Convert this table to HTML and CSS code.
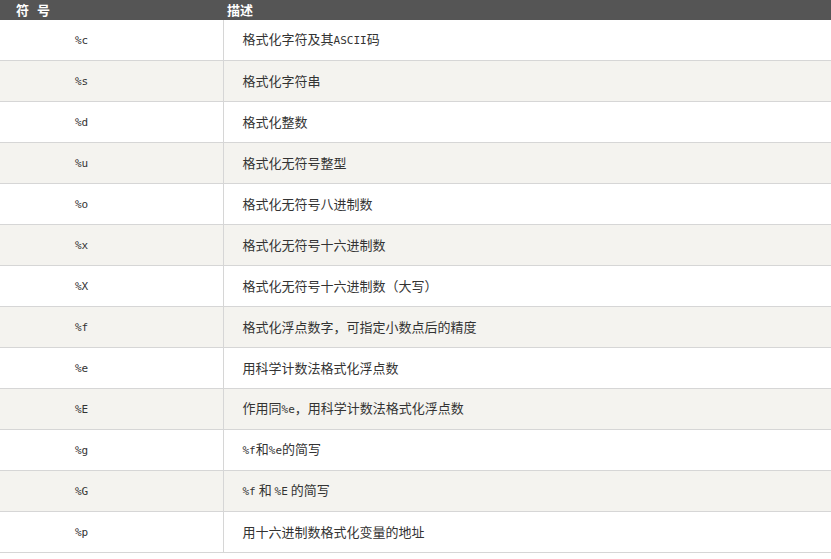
FILE: index.html
```html
<!DOCTYPE html>
<html lang="zh-CN">
<head>
<meta charset="utf-8">
<title>格式化符号</title>
<link rel="stylesheet" href="styles.css">
</head>
<body>
<table class="fmt">
  <thead>
    <tr><th class="c1">符 号</th><th class="c2">描述</th></tr>
  </thead>
  <tbody>
    <tr><td class="c1"><span class="m">%c</span></td><td class="c2">格式化字符及其<span class="m">ASCII</span>码</td></tr>
    <tr><td class="c1"><span class="m">%s</span></td><td class="c2">格式化字符串</td></tr>
    <tr><td class="c1"><span class="m">%d</span></td><td class="c2">格式化整数</td></tr>
    <tr><td class="c1"><span class="m">%u</span></td><td class="c2">格式化无符号整型</td></tr>
    <tr><td class="c1"><span class="m">%o</span></td><td class="c2">格式化无符号八进制数</td></tr>
    <tr><td class="c1"><span class="m">%x</span></td><td class="c2">格式化无符号十六进制数</td></tr>
    <tr><td class="c1"><span class="m">%X</span></td><td class="c2">格式化无符号十六进制数（大写）</td></tr>
    <tr><td class="c1"><span class="m">%f</span></td><td class="c2">格式化浮点数字，可指定小数点后的精度</td></tr>
    <tr><td class="c1"><span class="m">%e</span></td><td class="c2">用科学计数法格式化浮点数</td></tr>
    <tr><td class="c1"><span class="m">%E</span></td><td class="c2">作用同<span class="m">%e</span>，用科学计数法格式化浮点数</td></tr>
    <tr><td class="c1"><span class="m">%g</span></td><td class="c2"><span class="m">%f</span>和<span class="m">%e</span>的简写</td></tr>
    <tr><td class="c1"><span class="m">%G</span></td><td class="c2"><span class="m">%f</span> 和 <span class="m">%E</span> 的简写</td></tr>
    <tr><td class="c1"><span class="m">%p</span></td><td class="c2">用十六进制数格式化变量的地址</td></tr>
  </tbody>
</table>
</body>
</html>
```
FILE: styles.css
```css
html, body {
  margin: 0;
  padding: 0;
  background: #ffffff;
}
body {
  font-family: "Noto Sans CJK SC", "Liberation Sans", sans-serif;
  font-size: 13px;
  color: #333333;
}
.fmt {
  border-collapse: collapse;
  width: 831px;
  table-layout: fixed;
}
.fmt th {
  background: #555555;
  color: #ffffff;
  font-weight: bold;
  text-align: left;
  height: 20px;
  padding: 0;
  line-height: 20px;
  font-size: 13px;
  white-space: pre;
}
.fmt th.c1 {
  width: 223px;
  padding-left: 16px;
  box-sizing: border-box;
  word-spacing: 5px;
}
.fmt th.c2 {
  padding-left: 4px;
}
.fmt td {
  height: 40px;
  padding: 0;
  border-bottom: 1px solid #d6d6d6;
  vertical-align: middle;
  line-height: 18px;
  white-space: pre;
}
.fmt td.c1 {
  padding-left: 75px;
  border-right: 1px solid #d6d6d6;
}
.fmt td.c2 {
  padding-left: 19px;
}
.fmt tbody tr:nth-child(even) td {
  background: #f4f3ef;
}
.m {
  font-family: "DejaVu Sans Mono", "Liberation Mono", monospace;
  font-size: 11px;
}
```
